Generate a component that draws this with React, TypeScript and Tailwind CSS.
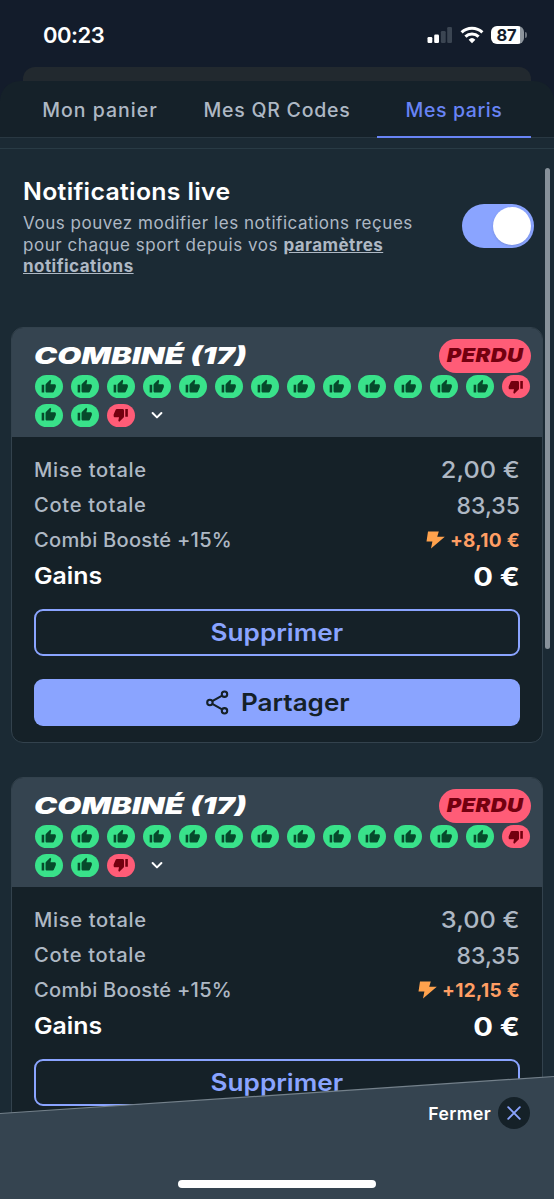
import { useState } from 'react';
import { MdThumbUp, MdThumbDown } from 'react-icons/md';
import clsx from 'clsx';

interface Bet {
  id: number; title: string; status: string; results: boolean[];
  stake: string; odds: string; boost: string; gains: string;
}

const RESULTS = [true, true, true, true, true, true, true, true, true, true, true, true, true, false, true, true, false];

const BETS: Bet[] = [
  { id: 1, title: 'COMBINÉ (17)', status: 'PERDU', results: RESULTS, stake: '2,00 €', odds: '83,35', boost: '+8,10 €', gains: '0 €' },
  { id: 2, title: 'COMBINÉ (17)', status: 'PERDU', results: RESULTS, stake: '3,00 €', odds: '83,35', boost: '+12,15 €', gains: '0 €' },
];

function StatusBar() {
  return (
    <div className="flex h-[67px] items-start justify-between pl-[43px] pr-[27px] pt-[25px]">
      <span className="text-[22px] font-semibold leading-[21px] tracking-[-0.5px] text-white">00:23</span>
      <div className="flex items-center pt-[1px]">
        <svg width="26" height="18" viewBox="0 0 26 18">
          <rect x="1.5" y="11" width="4.8" height="6" rx="1.2" fill="#fff" />
          <rect x="8.2" y="8.5" width="4.8" height="8.5" rx="1.2" fill="#fff" />
          <rect x="14.9" y="5" width="4.8" height="12" rx="1.2" fill="#3b4552" />
          <rect x="21.2" y="1" width="4.8" height="16" rx="1.2" fill="#3b4552" />
        </svg>
        <svg className="ml-[8px]" width="24" height="18" viewBox="0 0 24 18" fill="none" stroke="#fff" strokeWidth="3">
          <path d="M1.6 6.4a15 15 0 0 1 20.8 0" />
          <path d="M5.4 10.7a9.5 9.5 0 0 1 13.2 0" />
          <path d="M12 17.2l-3.4-3.5a5 5 0 0 1 6.8 0z" fill="#fff" stroke="none" />
        </svg>
        <div className="ml-[7px] flex h-[18px] w-[33px] items-center justify-center rounded-[6px] bg-[linear-gradient(90deg,#fff_87%,#8d949c_87%)] pr-[2px] text-[16.5px] font-bold leading-none tracking-[-0.2px] text-[#131c2b]">87</div>
        <div className="ml-[1px] h-[6px] w-[2px] rounded-r-full bg-[#6b727c]" />
      </div>
    </div>
  );
}

function Tabs() {
  return (
    <div className="flex h-[57px] shrink-0 rounded-t-[20px] border-b border-[#293842] bg-[#152129] px-[23px] text-[19.5px] font-medium text-[#aeb8c4]">
      <button className="w-[154px] pt-[3px] tracking-[1px]">Mon panier</button>
      <button className="w-[200px] pt-[3px] tracking-[0.75px]">Mes QR Codes</button>
      <button className="-mb-px w-[154px] border-b-2 border-[#6884f5] pt-[4px] tracking-[0.6px] text-[#6884f5]">Mes paris</button>
    </div>
  );
}

function Toggle() {
  const [on, setOn] = useState(true);
  return (
    <button onClick={() => setOn(!on)} className={clsx('mt-[26px] flex h-[44px] w-[72px] shrink-0 items-center rounded-full p-[3px]', on ? 'justify-end bg-[#8aa4ff]' : 'bg-[#354550]')}>
      <span className="size-[38px] rounded-full bg-white shadow" />
    </button>
  );
}

function ResultPill({ won }: { won: boolean }) {
  return (
    <span className={clsx('flex h-[23px] w-[28px] items-center justify-center rounded-full', won ? 'bg-[#39e28a] text-[#064a2b]' : 'bg-[#ff5c77] text-[#73000f]')}>
      {won ? <MdThumbUp size={15.5} /> : <MdThumbDown size={15.5} />}
    </span>
  );
}

function BetCard({ bet }: { bet: Bet }) {
  return (
    <div className="h-[416px] shrink-0 overflow-hidden rounded-[12px] border border-[#33424d] bg-[#152128]">
      <div className="h-[109px] bg-[#354450] pl-[23px] pr-[11.5px] pt-[10px]">
        <div className="flex h-[35px] items-center justify-between">
          <h2 className="-ml-px origin-left scale-x-[1.35] whitespace-nowrap pt-[2px] text-[23px] font-black italic text-white">{bet.title}</h2>
          <span className="flex h-[34px] w-[92px] items-center justify-center rounded-full bg-[#ff5c77] text-[#73000f]">
            <span className="scale-x-[1.16] pt-[1px] text-[19px] font-black italic tracking-[0.3px]">{bet.status}</span>
          </span>
        </div>
        <div className="mt-[2px] flex flex-wrap gap-x-[7.95px] gap-y-[5.5px]">
          {bet.results.map((won, i) => <ResultPill key={i} won={won} />)}
          <svg className="ml-[8px] mt-[5px]" width="12" height="12" viewBox="0 0 12 12" fill="none" stroke="#fff" strokeWidth="2" strokeLinecap="round" strokeLinejoin="round">
            <path d="M1.6 4 6 8.4 10.4 4" />
          </svg>
        </div>
      </div>

      <div className="px-[22px] pt-[15.5px] font-medium text-[#aeb8c4]">
        <div className="flex h-[36px] items-center justify-between">
          <span className="origin-left scale-x-[1.03] text-[19.5px] tracking-[0.65px]">Mise totale</span>
          <span className="origin-right scale-x-[1.1] text-[23px]">{bet.stake}</span>
        </div>
        <div className="flex h-[35px] items-center justify-between">
          <span className="origin-left scale-x-[1.03] text-[19.5px] tracking-[0.7px]">Cote totale</span>
          <span className="text-[23px]">{bet.odds}</span>
        </div>
        <div className="flex h-[35px] items-center justify-between">
          <span className="origin-left scale-x-[1.03] text-[19.5px] tracking-[0.25px]">Combi Boosté +15%</span>
          <span className="flex items-center gap-[5px] text-[19px] font-bold text-[#ff9e64]">
            <svg className="-mt-[3px]" width="19" height="18" viewBox="0 0 19 18" fill="#ffa24d">
              <path d="M2 0.5h10.8l-1.6 5.2h7.6L5 17.5l1.4-7H0.5z" />
            </svg>
            <span className="pt-[1px] tracking-[0.3px]">{bet.boost}</span>
          </span>
        </div>
        <div className="flex h-[36px] items-center justify-between text-white">
          <span className="origin-left scale-x-[1.08] text-[23px] font-semibold">Gains</span>
          <span className="origin-right scale-x-[1.17] pt-[2px] text-[25px] font-bold">{bet.gains}</span>
        </div>
        <button className="mt-[14.5px] flex h-[47px] w-full items-center justify-center rounded-[9px] border-2 border-[#8aa4ff] text-[24px] font-semibold text-[#8aa4ff]">
          <span className="scale-x-[1.09]">Supprimer</span>
        </button>
        <button className="mt-[23px] flex h-[47px] w-full items-center gap-[12px] rounded-[9px] bg-[#8aa4ff] pl-[172px] text-[24px] font-semibold text-[#152128]">
          <svg width="23" height="25" viewBox="0 0 23 25" fill="none" stroke="#152128" strokeWidth="2.1">
            <circle cx="3.9" cy="12.5" r="2.7" />
            <circle cx="18.5" cy="4.2" r="2.7" />
            <circle cx="18.5" cy="20.8" r="2.7" />
            <path d="M6.3 11.2 16.1 5.6M6.3 13.8l9.8 5.6" />
          </svg>
          <span className="origin-left scale-x-[1.085]">Partager</span>
        </button>
      </div>
    </div>
  );
}

export default function App() {
  return (
    <div className="relative flex h-[1199px] w-[554px] flex-col overflow-hidden bg-[#131c2b] font-['Inter',sans-serif]">
      <StatusBar />
      <div className="mx-[23px] h-[14px] shrink-0 rounded-t-[12px] bg-[#22292f]" />
      <Tabs />

      <div className="flex min-h-0 flex-1 flex-col bg-[#1b2a34]">
        <div className="h-[11px] shrink-0 border-b border-[#293b45]" />
        <div className="flex h-[178px] shrink-0 justify-between pl-[23px] pr-[20px] pt-[29px]">
          <div>
            <h1 className="origin-left scale-x-[1.035] text-[24px] font-semibold leading-[28px] tracking-[0.3px] text-white">Notifications live</h1>
            <p className="mt-[7px] w-[420px] text-[17px] leading-[21.6px] tracking-[0.54px] text-[#aeb8c4]">
              Vous pouvez modifier les notifications reçues<br />pour chaque sport depuis vos <b className="tracking-[0.45px] underline">paramètres<br />notifications</b>
            </p>
          </div>
          <Toggle />
        </div>
        <div className="flex flex-col gap-[34px] px-[11px]">
          {BETS.map(bet => <BetCard key={bet.id} bet={bet} />)}
        </div>
      </div>

      {/* Scrollbar */}
      <div className="absolute right-[4px] top-[168px] h-[481px] w-[5px] rounded-full bg-[#87919a]" />

      {/* Slanted footer */}
      <div className="absolute inset-x-0 bottom-0 h-[124px]">
        <svg className="absolute inset-0" width="554" height="124" viewBox="0 0 554 124">
          <path d="M0 38.5 554 1.5V124H0z" fill="#354450" />
          <path d="M0 38.5 554 1.5" stroke="#74818b" strokeWidth="1.2" />
        </svg>
        <div className="relative flex h-full flex-col items-center justify-between pb-[11px] pt-[22px]">
          <button className="mr-[24px] flex items-center gap-[7px] self-end text-[17.5px] font-semibold tracking-[0.4px] text-white">
            <span className="pt-[2px]">Fermer</span>
            <span className="flex size-[32px] items-center justify-center rounded-full bg-[#152128]">
              <svg width="14" height="14" viewBox="0 0 14 14" stroke="#8aa4ff" strokeWidth="1.9" strokeLinecap="round">
                <path d="M1.2 1.2 12.8 12.8M12.8 1.2 1.2 12.8" />
              </svg>
            </span>
          </button>
          <div className="h-[8px] w-[198px] rounded-full bg-white" />
        </div>
      </div>
    </div>
  );
}
